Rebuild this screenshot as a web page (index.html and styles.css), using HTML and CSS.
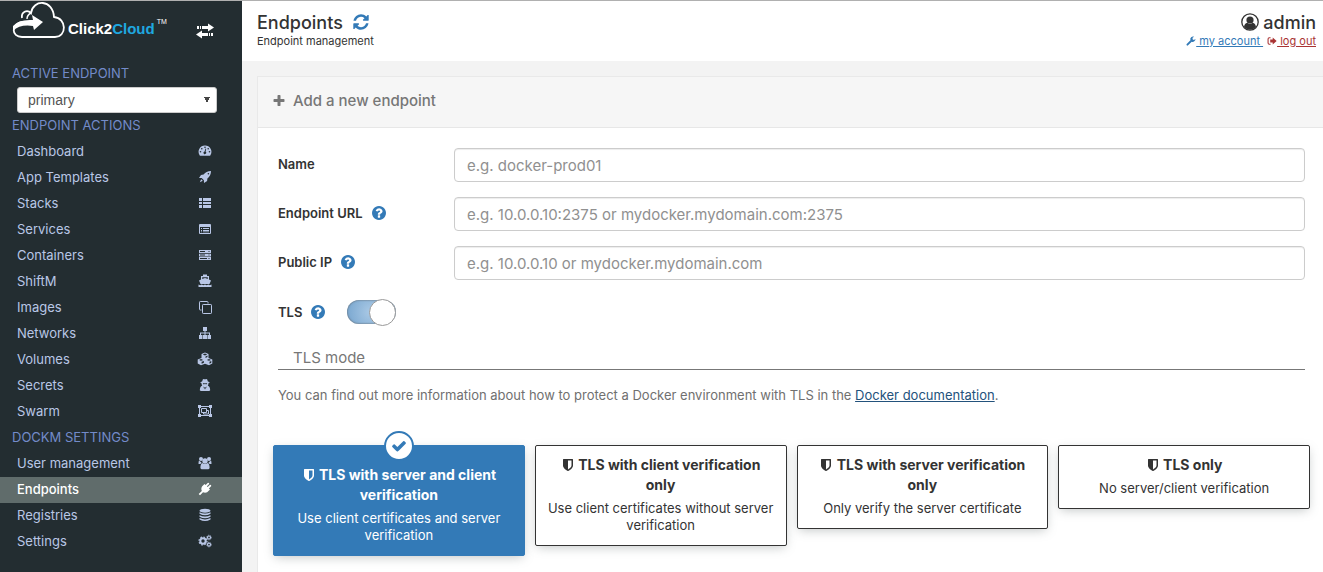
FILE: index.html
```html
<!DOCTYPE html>
<html lang="en">
<head>
<meta charset="utf-8">
<title>Endpoints</title>
<link rel="stylesheet" href="styles.css">
</head>
<body>
<svg class="sprite" aria-hidden="true">
  <symbol id="refresh" viewBox="0 0 1792 1792"><path d="M1639 1056q0 5-1 7-64 268-268 434.500t-478 166.500q-146 0-282.500-55t-243.500-157l-129 129q-19 19-45 19t-45-19-19-45v-448q0-26 19-45t45-19h448q26 0 45 19t19 45-19 45l-137 137q71 66 161 102t187 36q134 0 250-65t186-179q11-17 53-117 8-23 30-23h192q13 0 22.500 9.500t9.500 22.500zm25-800v448q0 26-19 45t-45 19h-448q-26 0-45-19t-19-45 19-45l138-138q-148-137-349-137-134 0-250 65t-186 179q-11 17-53 117-8 23-30 23h-199q-13 0-22.500-9.500t-9.500-22.500v-7q65-268 270-434.500t480-166.500q146 0 284 55.500t245 156.500l130-129q19-19 45-19t45 19 19 45z"/></symbol>
  <symbol id="plus" viewBox="0 0 1792 1792"><path d="M1600 736v192q0 40-28 68t-68 28h-416v416q0 40-28 68t-68 28h-192q-40 0-68-28t-28-68v-416h-416q-40 0-68-28t-28-68v-192q0-40 28-68t68-28h416v-416q0-40 28-68t68-28h192q40 0 68 28t28 68v416h416q40 0 68 28t28 68z"/></symbol>
  <symbol id="check" viewBox="0 0 1792 1792"><path d="M1671 566q0 40-28 68l-724 724-136 136q-28 28-68 28t-68-28l-136-136-362-362q-28-28-28-68t28-68l136-136q28-28 68-28t68 28l294 295 656-657q28-28 68-28t68 28l136 136q28 28 28 68z"/></symbol>
  <symbol id="shield" viewBox="0 0 1792 1792"><path d="M1344 960v-640h-448v1137q119-63 213-137 235-184 235-360zm192-768v768q0 86-33.500 170.500t-83 150-118 127.500-126.500 103-121 77.500-89.500 49.500-42.500 20q-12 6-26 6t-26-6q-16-7-42.500-20t-89.500-49.500-121-77.500-126.500-103-118-127.500-83-150-33.500-170.500v-768q0-26 19-45t45-19h1152q26 0 45 19t19 45z"/></symbol>
  <symbol id="help" viewBox="128 128 1536 1536"><path d="M1024 1376v-192q0-14-9-23t-23-9h-192q-14 0-23 9t-9 23v192q0 14 9 23t23 9h192q14 0 23-9t9-23zm256-672q0-88-55.500-163t-138.500-116-170-41q-243 0-371 213-15 24 8 42l132 100q7 6 19 6 16 0 25-12 53-68 86-92 34-24 86-24 48 0 85.500 26t37.500 59q0 38-20 61t-68 45q-63 28-115.500 86.500t-52.500 125.500v36q0 14 9 23t23 9h192q14 0 23-9t9-23q0-19 21.500-49.500t54.500-49.500q32-18 49-28.500t46-35 44.500-48 28-60.500 12.500-81zm384 192q0 209-103 385.500t-279.500 279.500-385.500 103-385.500-103-279.500-279.500-103-385.500 103-385.500 279.500-279.500 385.500-103 385.500 103 279.500 279.500 103 385.500z"/></symbol>
  <symbol id="user" viewBox="0 0 18 18"><circle cx="9" cy="9" r="8.200" fill="none" stroke="currentColor" stroke-width="1.300"/><circle cx="9" cy="7" r="3.600"/><path d="M3 14c.4-2.600 1.500-4 3.200-4.200 1.700 1.300 3.900 1.300 5.600 0C13.500 10 14.600 11.400 15 14a8 8 0 0 1-12 0z"/></symbol>
  <symbol id="wrench" viewBox="0 0 14 14"><path d="M1 11.200 6.200 6A4 4 0 0 1 11.400 1L9.200 2.400V4.500L11 5.600 13.300 4.200A4 4 0 0 1 8 8L2.900 13a1.300 1.300 0 0 1-1.900-1.800z"/></symbol>
  <symbol id="logout" viewBox="0 0 14 14"><path d="M5 2.500H3.200A1.700 1.700 0 0 0 1.500 4.200v5.600a1.700 1.700 0 0 0 1.700 1.700H5" fill="none" stroke="currentColor" stroke-width="1.500"/><path d="M4.500 5H8V2.200L13.500 7 8 11.800V9H4.500z"/></symbol>
  <symbol id="swap" viewBox="0 0 20 16"><path d="M2 3h2v3H2zM5 3h1v3H5zM7 3h6V0.500L19 4.500 13 8.500V6H7zM18 10h-2v3h2zM15 10h-1v3h1zM13 10H7V7.500L1 11.500 7 15.500V13h6z"/></symbol>
  <symbol id="dashboard" viewBox="0 0 14 14"><path fill-rule="evenodd" d="M7 1.500a6.300 6.300 0 0 0-5.400 9.700q.3.600.9.600h9q.6 0 .9-.6A6.300 6.300 0 0 0 7 1.500zM7 2.500a.8.800 0 1 1 0 1.600.8.800 0 0 1 0-1.600zM3.800 3.900a.8.800 0 1 1 0 1.600.8.800 0 0 1 0-1.600zM2.500 7a.8.800 0 1 1 0 1.600.8.800 0 0 1 0-1.600zM11.500 7a.8.800 0 1 1 0 1.600.8.800 0 0 1 0-1.600zM10.200 3.900a.8.800 0 1 1 0 1.600.8.800 0 0 1 0-1.600zM7.500 4.600l.7.200-.6 3a1.300 1.300 0 1 1-1-.2z"/></symbol>
  <symbol id="rocket" viewBox="0 0 14 14"><path fill-rule="evenodd" d="M13 1C9.500 1 7.500 2.200 5.600 4.600L3 4.900 1 8l2.700.1 2.200 2.200L6 13l3.100-2 .3-2.600C11.800 6.500 13 4.500 13 1zM10.400 2.900a.8.800 0 1 1 0 1.600.8.800 0 0 1 0-1.600zM3.200 9.200 4.800 10.800 1.800 12.200z"/></symbol>
  <symbol id="stacks" viewBox="0 0 14 14"><path d="M1 2h3v3H1zM5 2h8v3H5zM1 6h3v2H1zM5 6h8v2H5zM1 9h3v3H1zM5 9h8v3H5z"/></symbol>
  <symbol id="services" viewBox="0 0 14 14"><path fill-rule="evenodd" d="M2 2h10q1 0 1 1v8q0 1-1 1H2q-1 0-1-1V3q0-1 1-1zm0 3v6h10V5z"/><path d="M3 6h1v1H3zM5 6h6v1H5zM3 8h1v1H3zM5 8h6v1H5zM3 9.500h1v.8H3zM5 9.500h6v.8H5z"/></symbol>
  <symbol id="containers" viewBox="0 0 14 14"><path fill-rule="evenodd" d="M1 2h12v3H1zM1 5.700h12v2.700H1zM1 9.100h12v3H1zM2 3v1h5V3zM2 6.600v1h5v-1zM2 10v1h7v-1zM10.500 3v1h1V3zM10.500 6.600v1h1v-1zM10.500 10v1h1v-1z"/></symbol>
  <symbol id="ship" viewBox="0 0 14 14"><path d="M5 .5h4V2h2v3.500l2 1L11.500 10h-9L1 6.500l2-1V2h2zM4.200 3.200v1.800L7 4l2.800 1V3.200z"/><path d="M.5 10.500l1.600.8 1.600-.8 1.700.8 1.600-.8 1.600.8 1.700-.8 1.600.8 1.600-.8V13H.5z"/></symbol>
  <symbol id="images" viewBox="0 0 14 14"><path d="M10 3.500V2.200Q10 1.500 9.300 1.500H2.200q-.7 0-.7.700v7.100q0 .7.700.7h1.300M5.200 4.500h7.600q.7 0 .7.700v7.600q0 .7-.7.700H5.200q-.7 0-.7-.7V5.200q0-.7.700-.7" fill="none" stroke="currentColor"/></symbol>
  <symbol id="network" viewBox="0 0 14 14"><path d="M5 1h4v4H7.500v1.500H12V9h1v4H9.500V9H11V7.500H7.500V9H9v4H5V9h1.500V7.500H3V9h1.500v4H1V9h1V6.500h4.500V5H5z"/></symbol>
  <symbol id="cubes" viewBox="0 0 16 14"><path fill-rule="evenodd" d="M8 .5l3.500 1.500v4L15.300 7.600v4L12 13.300 8 11.700 4 13.300.7 11.600v-4L4.500 6V2zm0 1L5.800 2.500 8 3.500l2.200-1zM8.500 4.400V6l2-.9V3.500zM4 7 2 7.900l2 .9 2.200-.9zm.6 2.800v2l2.300-1V9zM12 7l-2.200.9 2.200.9 2-.9zm.5 2.800v2l1.800-1V9z"/></symbol>
  <symbol id="secret" viewBox="0 0 14 14"><path fill-rule="evenodd" d="M5 1q2 .7 4 0l.9 2.500 2.100.8-1.400.8q0 1.500-.8 2.400 2.200.9 2.400 4.700l-1 .8H2.800l-1-.8Q2 8.400 4.200 7.500q-.8-.9-.8-2.400L2 4.300l2.100-.8zM4.800 5.200l.4 1h1.300l.5-.6.500.6h1.300l.4-1zM5.400 8.500l.9 3 .5-2zM8.600 8.500l-1.400 1 .5 2z"/></symbol>
  <symbol id="swarm" viewBox="0 0 16 14"><path d="M2.500 2.500h11v9h-11zM4.500 4.500h5v4h-5zM10 6.500h1.500v3.500h-5V9" fill="none" stroke="currentColor"/><path d="M1 1h3v3H1zM12 1h3v3h-3zM1 10h3v3H1zM12 10h3v3h-3z"/></symbol>
  <symbol id="users" viewBox="0 0 14 14"><circle cx="3" cy="3" r="2"/><circle cx="11" cy="3" r="2"/><circle cx="7" cy="5" r="2.700"/><path d="M1 4.500Q.5 5 .5 8h2l1-1.500zM13 4.500q.5.500.5 3.500h-2l-1-1.500zM4.300 7Q6.900 9 9.700 7 11.600 7.800 11.600 12q-.4 1.300-1.500 1.300H3.900Q2.800 13.300 2.400 12 2.400 7.800 4.300 7z"/></symbol>
  <symbol id="plug" viewBox="0 0 14 14"><path d="M13.300 4 10.900 6.400 12 7.500l-1 1Q8.500 11.700 5 10.300L2 13.300.7 12 3.800 9Q2.300 5.500 5.500 3l1-1L7.600 3.100 10 .7q1.400.1 1.200 1.300L8.900 4.300 9.700 5.100 12 2.800q1.300.1 1.300 1.200z"/></symbol>
  <symbol id="database" viewBox="0 0 14 14"><ellipse cx="7" cy="2.700" rx="5.500" ry="2"/><path d="M1.500 4.300q5.500 2.600 11 0v1.500q-5.500 3-11 0zM1.500 7.200q5.500 2.600 11 0v1.500q-5.500 3-11 0zM1.500 10.100q5.500 2.600 11 0v1.300q-5.500 3.400-11 0z"/></symbol>
  <symbol id="cogs" viewBox="0 0 14 14"><circle cx="5" cy="7" r="2.700" fill="none" stroke="currentColor" stroke-width="2"/><circle cx="5" cy="7" r="4" fill="none" stroke="currentColor" stroke-width="1.200" stroke-dasharray="1.600 1.540"/><circle cx="11" cy="3.500" r="1.500" fill="none" stroke="currentColor" stroke-width="1.200"/><circle cx="11" cy="3.500" r="2.300" fill="none" stroke="currentColor" stroke-width=".8" stroke-dasharray="1 .8"/><circle cx="11" cy="10.600" r="1.500" fill="none" stroke="currentColor" stroke-width="1.200"/><circle cx="11" cy="10.600" r="2.300" fill="none" stroke="currentColor" stroke-width=".8" stroke-dasharray="1 .8"/></symbol>
</svg>
<div class="app">
  <aside class="sidebar">
    <div class="brand">
      <svg class="cloud" viewBox="0 0 54 38" aria-hidden="true"><path d="M10 17C9 11 15 8 19 12 21-2 41-2 42 16 55 17 55 36 43 36H10C-1 36-1 23 10 21" fill="none" stroke="#fff" stroke-width="1.800"/><path d="M19 12q-4 2-4 6" fill="none" stroke="#fff" stroke-width="1.400"/><path d="M1 25Q7 18 21 19l-1-5L31 21l-9 8-1-4Q8 23 1 30z" fill="#fff"/></svg>
      <span class="brand-name">Click2<span class="brand-accent">Cloud</span></span><span class="trademark">TM</span>
      <button class="collapse" type="button" aria-label="Toggle sidebar"><svg class="swap"><use href="#swap"/></svg></button>
    </div>
    <label class="section" for="active">ACTIVE ENDPOINT</label>
    <div class="select-wrap"><select id="active" class="select"><option>primary</option></select></div>
    <div class="section">ENDPOINT ACTIONS</div>
    <nav class="nav">
      <a class="item" href="#">Dashboard<svg class="icon"><use href="#dashboard"/></svg></a>
      <a class="item" href="#">App Templates<svg class="icon"><use href="#rocket"/></svg></a>
      <a class="item" href="#">Stacks<svg class="icon"><use href="#stacks"/></svg></a>
      <a class="item" href="#">Services<svg class="icon"><use href="#services"/></svg></a>
      <a class="item" href="#">Containers<svg class="icon"><use href="#containers"/></svg></a>
      <a class="item" href="#">ShiftM<svg class="icon"><use href="#ship"/></svg></a>
      <a class="item" href="#">Images<svg class="icon"><use href="#images"/></svg></a>
      <a class="item" href="#">Networks<svg class="icon"><use href="#network"/></svg></a>
      <a class="item wide" href="#">Volumes<svg class="icon"><use href="#cubes"/></svg></a>
      <a class="item" href="#">Secrets<svg class="icon"><use href="#secret"/></svg></a>
      <a class="item wide" href="#">Swarm<svg class="icon"><use href="#swarm"/></svg></a>
    </nav>
    <div class="section">DOCKM SETTINGS</div>
    <nav class="nav">
      <a class="item" href="#">User management<svg class="icon"><use href="#users"/></svg></a>
      <a class="item active" href="#">Endpoints<svg class="icon"><use href="#plug"/></svg></a>
      <a class="item" href="#">Registries<svg class="icon"><use href="#database"/></svg></a>
      <a class="item" href="#">Settings<svg class="icon"><use href="#cogs"/></svg></a>
    </nav>
  </aside>
  <main class="main">
    <header class="header">
      <div>
        <h1 class="title">Endpoints <a class="refresh" href="#" aria-label="Refresh"><svg class="refresh-icon"><use href="#refresh"/></svg></a></h1>
        <div class="subtitle">Endpoint management</div>
      </div>
      <div class="account">
        <div class="title"><svg class="user-icon"><use href="#user"/></svg>admin</div>
        <div class="links">
          <a class="link" href="#"><svg class="small-icon"><use href="#wrench"/></svg><span class="link-text">&nbsp;my account&nbsp;</span></a>
          <a class="link logout" href="#"><svg class="small-icon"><use href="#logout"/></svg><span class="link-text">&nbsp;log out</span></a>
        </div>
      </div>
    </header>
    <section class="panel">
      <h2 class="panel-head"><svg class="icon"><use href="#plus"/></svg>Add a new endpoint</h2>
      <form class="form">
        <div class="row"><label class="label" for="name">Name</label><input class="input" id="name" type="text" placeholder="e.g. docker-prod01"></div>
        <div class="row"><label class="label" for="url">Endpoint URL<svg class="help"><use href="#help"/></svg></label><input class="input" id="url" type="text" placeholder="e.g. 10.0.0.10:2375 or mydocker.mydomain.com:2375"></div>
        <div class="row"><label class="label" for="ip">Public IP<svg class="help"><use href="#help"/></svg></label><input class="input" id="ip" type="text" placeholder="e.g. 10.0.0.10 or mydocker.mydomain.com"></div>
        <div class="tls-row"><label class="tls-label" for="tls">TLS<svg class="help"><use href="#help"/></svg></label><input class="switch" id="tls" type="checkbox" checked></div>
        <h3 class="mode">TLS mode</h3>
        <p class="info">You can find out more information about how to protect a Docker environment with TLS in the <a class="docs" href="#">Docker documentation</a>.</p>
        <div class="cards">
          <button class="card selected" type="button"><span class="badge"><svg class="check"><use href="#check"/></svg></span><span class="card-title"><svg class="shield"><use href="#shield"/></svg> TLS with server and client verification</span><span class="card-text">Use client certificates and server verification</span></button>
          <button class="card" type="button"><span class="card-title"><svg class="shield"><use href="#shield"/></svg> TLS with client verification only</span><span class="card-text">Use client certificates without server verification</span></button>
          <button class="card" type="button"><span class="card-title"><svg class="shield"><use href="#shield"/></svg> TLS with server verification only</span><span class="card-text">Only verify the server certificate</span></button>
          <button class="card" type="button"><span class="card-title"><svg class="shield"><use href="#shield"/></svg> TLS only</span><span class="card-text">No server/client verification</span></button>
        </div>
      </form>
    </section>
  </main>
</div>
</body>
</html>
```

FILE: styles.css
```css
* { box-sizing: border-box; }
body { margin: 0; font-family: Inter, "Open Sans", sans-serif; font-size: 13px; font-weight: 400; color: #333; background: #f3f3f3; }
svg { fill: currentColor; flex: none; }
.sprite { display: none; }
.app { display: flex; min-height: 100vh; border-top: 1px solid #b0b0b0; }

.sidebar { width: 242px; flex: none; background: #232d31; }
.brand { display: flex; align-items: flex-start; height: 60px; padding: 0 27px 0 12px; color: #fff; }
.cloud { width: 54px; height: 38px; }
.brand-name { margin: 19px 0 0 2px; font: bold 15px/18px "Liberation Sans", Arial, sans-serif; }
.brand-accent { color: #1fa8e0; }
.trademark { margin: 17px 0 0 2px; font: 7px/8px "Liberation Sans", Arial, sans-serif; }
.collapse { margin: 22px 0 0 auto; padding: 0; border: 0; background: none; color: #fff; }
.swap { display: block; width: 20px; height: 16px; }
.section { display: block; height: 26px; padding-left: 12px; line-height: 24px; color: #738bc9; }
.select-wrap { padding: 0 25px 0 17px; }
.select { display: block; width: 100%; height: 26px; padding: 0 6px 0 10px; border: 1px solid #ccc; border-radius: 3px; color: #555; font: 14px "Liberation Sans", Arial, sans-serif; appearance: none; background: linear-gradient(to bottom right, #444 50%, transparent 50%) right 6px center / 3px 6px no-repeat, linear-gradient(to bottom left, #444 50%, transparent 50%) right 9px center / 3px 6px no-repeat, #fff; }
.item { display: flex; align-items: center; justify-content: space-between; height: 26px; padding: 0 30px 2px 17px; color: #b9c7e6; text-decoration: none; }
.item.active { background: #606c6b; color: #fff; font-weight: 500; }
.icon { width: 14px; height: 14px; }
.item.wide { padding-right: 29px; }
.item.wide .icon { width: 16px; }

.main { flex: 1; min-width: 0; }
.header { display: flex; justify-content: space-between; height: 60px; padding: 11px 7px 0 15px; background: #fff; }
.title { display: flex; align-items: center; height: 20px; margin: 0; font-size: 18px; font-weight: 500; }
.refresh { display: flex; margin-left: 9px; color: #337ab7; }
.refresh-icon { width: 18px; height: 18px; }
.subtitle, .links { margin-top: 1px; font-size: 11px; line-height: 16px; }
.account .title { justify-content: flex-end; }
.user-icon { width: 18px; height: 18px; margin-right: 4px; }
.links { display: flex; justify-content: flex-end; gap: 4px; }
.link { display: flex; align-items: center; color: #337ab7; text-decoration: none; }
.link-text { text-decoration: underline; }
.logout { color: #a93434; }
.small-icon { width: 10px; height: 10px; }

.panel { margin: 15px 0 0 15px; border: 1px solid #e9e9e9; border-width: 1px 0 0 1px; background: #fff; }
.panel-head { display: flex; align-items: center; gap: 7px; height: 51px; margin: 0; padding: 0 14px 3px; border-bottom: 1px solid #e7e7e7; background: #f6f6f6; color: #777; font-size: 15px; font-weight: 500; }
.form { padding: 20px 18px 16px 20px; }
.row { display: flex; align-items: flex-start; margin-bottom: 15px; }
.label { display: flex; align-items: center; width: 176px; height: 31px; font-weight: 600; }
.help { width: 14px; height: 14px; margin-left: 9px; color: #337ab7; }
.input { flex: 1; height: 34px; padding: 0 12px; border: 1px solid #ccc; border-radius: 4px; box-shadow: inset 0 1px 1px rgba(0,0,0,.075); font: 400 15px Inter, "Open Sans", sans-serif; color: #555; }
.input::placeholder { color: #909090; }
.tls-row { display: flex; align-items: center; gap: 22px; height: 34px; }
.tls-label { display: flex; align-items: center; font-weight: 600; }
.switch { appearance: none; width: 49px; height: 24px; margin: 0; border-radius: 12px; background: radial-gradient(circle at 24px 12px, #abcae6, #74a3cd); box-shadow: inset 0 0 2px #555; display: flex; justify-content: flex-end; align-items: center; }
.switch::before { content: ""; width: 25px; height: 25px; flex: none; border-radius: 50%; background: #fff; border: 1px solid #999; }
.mode { margin: 19px 0 0; padding: 0 15px 1px; line-height: 20px; border-bottom: 1px solid #777; color: #777; font-size: 15px; font-weight: 400; }
.info { margin: 15px 0 40px; line-height: 20px; color: #707070; }
.docs { color: #23527c; }
.cards { display: grid; grid-template-columns: repeat(4, minmax(0, 1fr)); align-items: start; gap: 10px; margin: 0 -5px; }
.card { position: relative; display: flex; flex-direction: column; gap: 5px; padding: 9px 6px 11px; border: 1px solid #333; border-radius: 2px; background: #fff; color: #333; font: inherit; text-align: center; box-shadow: 0 3px 10px -2px rgba(100,110,110,.4); }
.card.selected { padding-top: 19px; border-color: #337ab7; background: #337ab7; color: #fff; }
.card-title { padding: 0 8px; font-size: 14px; font-weight: 700; line-height: 20px; }
.card-text { line-height: 17px; }
.shield { width: 14px; height: 14px; vertical-align: -2px; }
.badge { position: absolute; top: -15px; left: 50%; margin-left: -15px; display: flex; align-items: center; justify-content: center; width: 30px; height: 30px; border: 2px solid #337ab7; border-radius: 50%; background: #fff; color: #337ab7; }
.check { width: 16px; height: 16px; }
```
